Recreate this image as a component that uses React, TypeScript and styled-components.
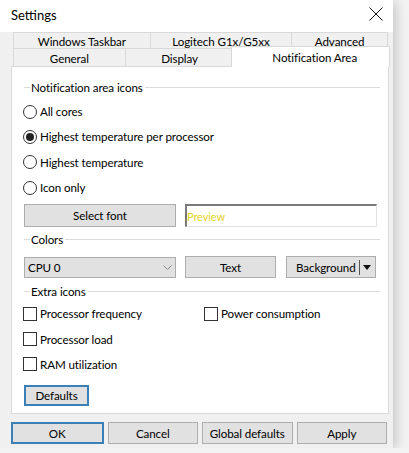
import React from 'react';
import styled, { createGlobalStyle } from 'styled-components';

const uiFont = 'Lato, "Noto Sans", sans-serif';
const textSize = '11.6px';
const faceBorder = '#d9d9d9';
const buttonFace = '#e1e1e1';
const buttonBorder = '#adadad';
const focusBlue = '#3a7fb6';

const GlobalStyle = createGlobalStyle`
  html, body {
    margin: 0;
    padding: 0;
    background: #f3f3f3;
  }
  body {
    font-family: ${uiFont};
    font-size: ${textSize};
    letter-spacing: -0.1px;
    color: #000;
  }
`;

const Window = styled.div`
  width: 393px;
  height: 448px;
  background: #f0f0f0;
  box-shadow: 2px 2px 12px rgba(0, 0, 0, 0.22);
  display: flex;
  flex-direction: column;
`;

const TitleBar = styled.div`
  height: 32px;
  background: #fff;
  display: flex;
  align-items: center;
  justify-content: space-between;
  padding: 0 10px 0 11px;
  box-sizing: border-box;
`;

const Title = styled.span`
  font-size: 13px;
  letter-spacing: 0;
  margin-top: -2px;
`;

const CloseIcon = styled.svg`
  width: 14px;
  height: 14px;
  margin-top: -4px;
`;

const TabStrip = styled.div`
  margin-left: 13px;
  width: 375px;
  display: flex;
  flex-direction: column;
`;

const TabRow = styled.div<{ $h: number }>`
  display: flex;
  height: ${(p) => p.$h}px;
`;

const Tab = styled.div<{ $w: number; $active?: boolean }>`
  width: ${(p) => p.$w}px;
  box-sizing: border-box;
  border: 1px solid ${faceBorder};
  border-bottom: none;
  margin-left: -1px;
  background: ${(p) => (p.$active ? '#fff' : '#f0f0f0')};
  display: flex;
  align-items: center;
  justify-content: center;
  line-height: 1;
  padding-top: 2px;
  ${(p) =>
    p.$active &&
    `
    position: relative;
    z-index: 1;
    margin: -2px -2px -1px -3px;
    width: ${p.$w + 4}px;
    padding-top: 1px;
    padding-left: 8px;
  `}
  &:first-child {
    margin-left: 0;
  }
`;

const Panel = styled.div`
  margin: 0 4px 0 11px;
  height: 348px;
  box-sizing: border-box;
  background: #fff;
  border: 1px solid ${faceBorder};
  padding: 12px 8px 0 12px;
  display: flex;
  flex-direction: column;
`;

const GroupHeader = styled.div<{ $mt: number }>`
  display: flex;
  align-items: center;
  height: 16px;
  margin-top: ${(p) => p.$mt}px;
  &::before {
    content: '';
    width: 6px;
    height: 1px;
    background: #dcdcdc;
  }
  &::after {
    content: '';
    flex: 1;
    height: 1px;
    background: #dcdcdc;
  }
`;

const GroupLabel = styled.span`
  padding: 0 2px 0 1px;
`;

const OptionList = styled.div<{ $mt: number }>`
  display: flex;
  flex-direction: column;
  margin-top: ${(p) => p.$mt}px;
  margin-left: -1px;
`;

const OptionRow = styled.div`
  height: 25.3px;
  display: flex;
  align-items: center;
  gap: 3px;
`;

const CheckGrid = styled.div`
  display: grid;
  grid-template-columns: 181px 1fr;
  margin-top: 2px;
  margin-left: -1px;
`;

const RadioDot = styled.span<{ $on?: boolean }>`
  width: 14px;
  height: 14px;
  box-sizing: border-box;
  border: 1px solid #333;
  border-radius: 50%;
  display: flex;
  align-items: center;
  justify-content: center;
  &::after {
    content: '';
    width: 8px;
    height: 8px;
    border-radius: 50%;
    background: ${(p) => (p.$on ? '#222' : 'transparent')};
  }
`;

const CheckBox = styled.span`
  width: 14px;
  height: 14px;
  box-sizing: border-box;
  border: 1px solid #333;
`;

const ControlRow = styled.div<{ $mt: number }>`
  display: flex;
  align-items: center;
  margin-top: ${(p) => p.$mt}px;
`;

const Button = styled.div<{ $w: number; $h?: number; $ml?: number; $default?: boolean }>`
  width: ${(p) => p.$w}px;
  height: ${(p) => p.$h ?? 22}px;
  margin-left: ${(p) => p.$ml ?? 0}px;
  box-sizing: border-box;
  background: ${buttonFace};
  border: ${(p) => (p.$default ? `2px solid ${focusBlue}` : `1px solid ${buttonBorder}`)};
  display: flex;
  align-items: center;
  justify-content: center;
`;

const PreviewBox = styled.div`
  width: 192px;
  height: 23px;
  margin-left: 9px;
  box-sizing: border-box;
  background: #fff;
  border-top: 2px solid #7a7a7a;
  border-left: 2px solid #7a7a7a;
  border-right: 1px solid #e3e3e3;
  border-bottom: 1px solid #e3e3e3;
  display: flex;
  align-items: center;
  color: #e2d31c;
  font-size: 11px;
`;

const Combo = styled.div`
  width: 152px;
  height: 21px;
  box-sizing: border-box;
  background: ${buttonFace};
  border: 1px solid ${buttonBorder};
  display: flex;
  align-items: center;
  justify-content: space-between;
  padding: 0 3px 0 3px;
`;

const SplitButton = styled(Button)`
  justify-content: flex-start;
  padding-left: 9px;
`;

const SplitDivider = styled.span`
  width: 1px;
  height: 15px;
  background: #555;
  margin-left: auto;
`;

const SplitArrow = styled.svg`
  margin: 0 4px 0 3px;
`;

const BottomBar = styled.div`
  display: flex;
  gap: 4px;
  margin: 8px 6px 0 11px;
`;

const BottomButton = styled(Button)`
  flex: 1;
`;

const radios = [
  'All cores',
  'Highest temperature per processor',
  'Highest temperature',
  'Icon only',
];

const App = () => (
  <>
    <GlobalStyle />
    <Window>
      <TitleBar>
        <Title>Settings</Title>
        <CloseIcon viewBox="0 0 14 14">
          <path d="M0.5 0.5 L13.5 13.5 M13.5 0.5 L0.5 13.5" stroke="#111" strokeWidth="1" fill="none" />
        </CloseIcon>
      </TitleBar>

      <TabStrip>
        <TabRow $h={16}>
          <Tab $w={138}>Windows Taskbar</Tab>
          <Tab $w={143}>Logitech G1x/G5xx</Tab>
          <Tab $w={97}>Advanced</Tab>
        </TabRow>
        <TabRow $h={18}>
          <Tab $w={113}>General</Tab>
          <Tab $w={110}>Display</Tab>
          <Tab $w={155} $active>
            Notification Area
          </Tab>
        </TabRow>
      </TabStrip>

      <Panel>
        <GroupHeader $mt={0}>
          <GroupLabel>Notification area icons</GroupLabel>
        </GroupHeader>
        <OptionList $mt={4}>
          {radios.map((r, i) => (
            <OptionRow key={r}>
              <RadioDot $on={i === 1} />
              {r}
            </OptionRow>
          ))}
        </OptionList>

        <ControlRow $mt={4}>
          <Button $w={152} $h={23}>Select font</Button>
          <PreviewBox>Preview</PreviewBox>
        </ControlRow>

        <GroupHeader $mt={4}>
          <GroupLabel>Colors</GroupLabel>
        </GroupHeader>
        <ControlRow $mt={9}>
          <Combo>
            CPU 0
            <svg width="9" height="5" viewBox="0 0 9 5">
              <polyline points="0.5,0.5 4.5,4.5 8.5,0.5" stroke="#888" fill="none" strokeWidth="1" />
            </svg>
          </Combo>
          <Button $w={91} $ml={9}>Text</Button>
          <SplitButton $w={90} $ml={10}>
            Background
            <SplitDivider />
            <SplitArrow width="8" height="5" viewBox="0 0 8 5">
              <polygon points="0,0 8,0 4,5" fill="#111" />
            </SplitArrow>
          </SplitButton>
        </ControlRow>

        <GroupHeader $mt={5}>
          <GroupLabel>Extra icons</GroupLabel>
        </GroupHeader>
        <CheckGrid>
          <OptionRow>
            <CheckBox />
            Processor frequency
          </OptionRow>
          <OptionRow>
            <CheckBox />
            Power consumption
          </OptionRow>
          <OptionRow>
            <CheckBox />
            Processor load
          </OptionRow>
          <span />
          <OptionRow>
            <CheckBox />
            RAM utilization
          </OptionRow>
        </CheckGrid>

        <ControlRow $mt={8}>
          <Button $w={65} $h={21} $default>
            Defaults
          </Button>
        </ControlRow>
      </Panel>

      <BottomBar>
        <BottomButton $w={90} $default>OK</BottomButton>
        <BottomButton $w={90}>Cancel</BottomButton>
        <BottomButton $w={90}>Global defaults</BottomButton>
        <BottomButton $w={90}>Apply</BottomButton>
      </BottomBar>
    </Window>
  </>
);

export default App;
